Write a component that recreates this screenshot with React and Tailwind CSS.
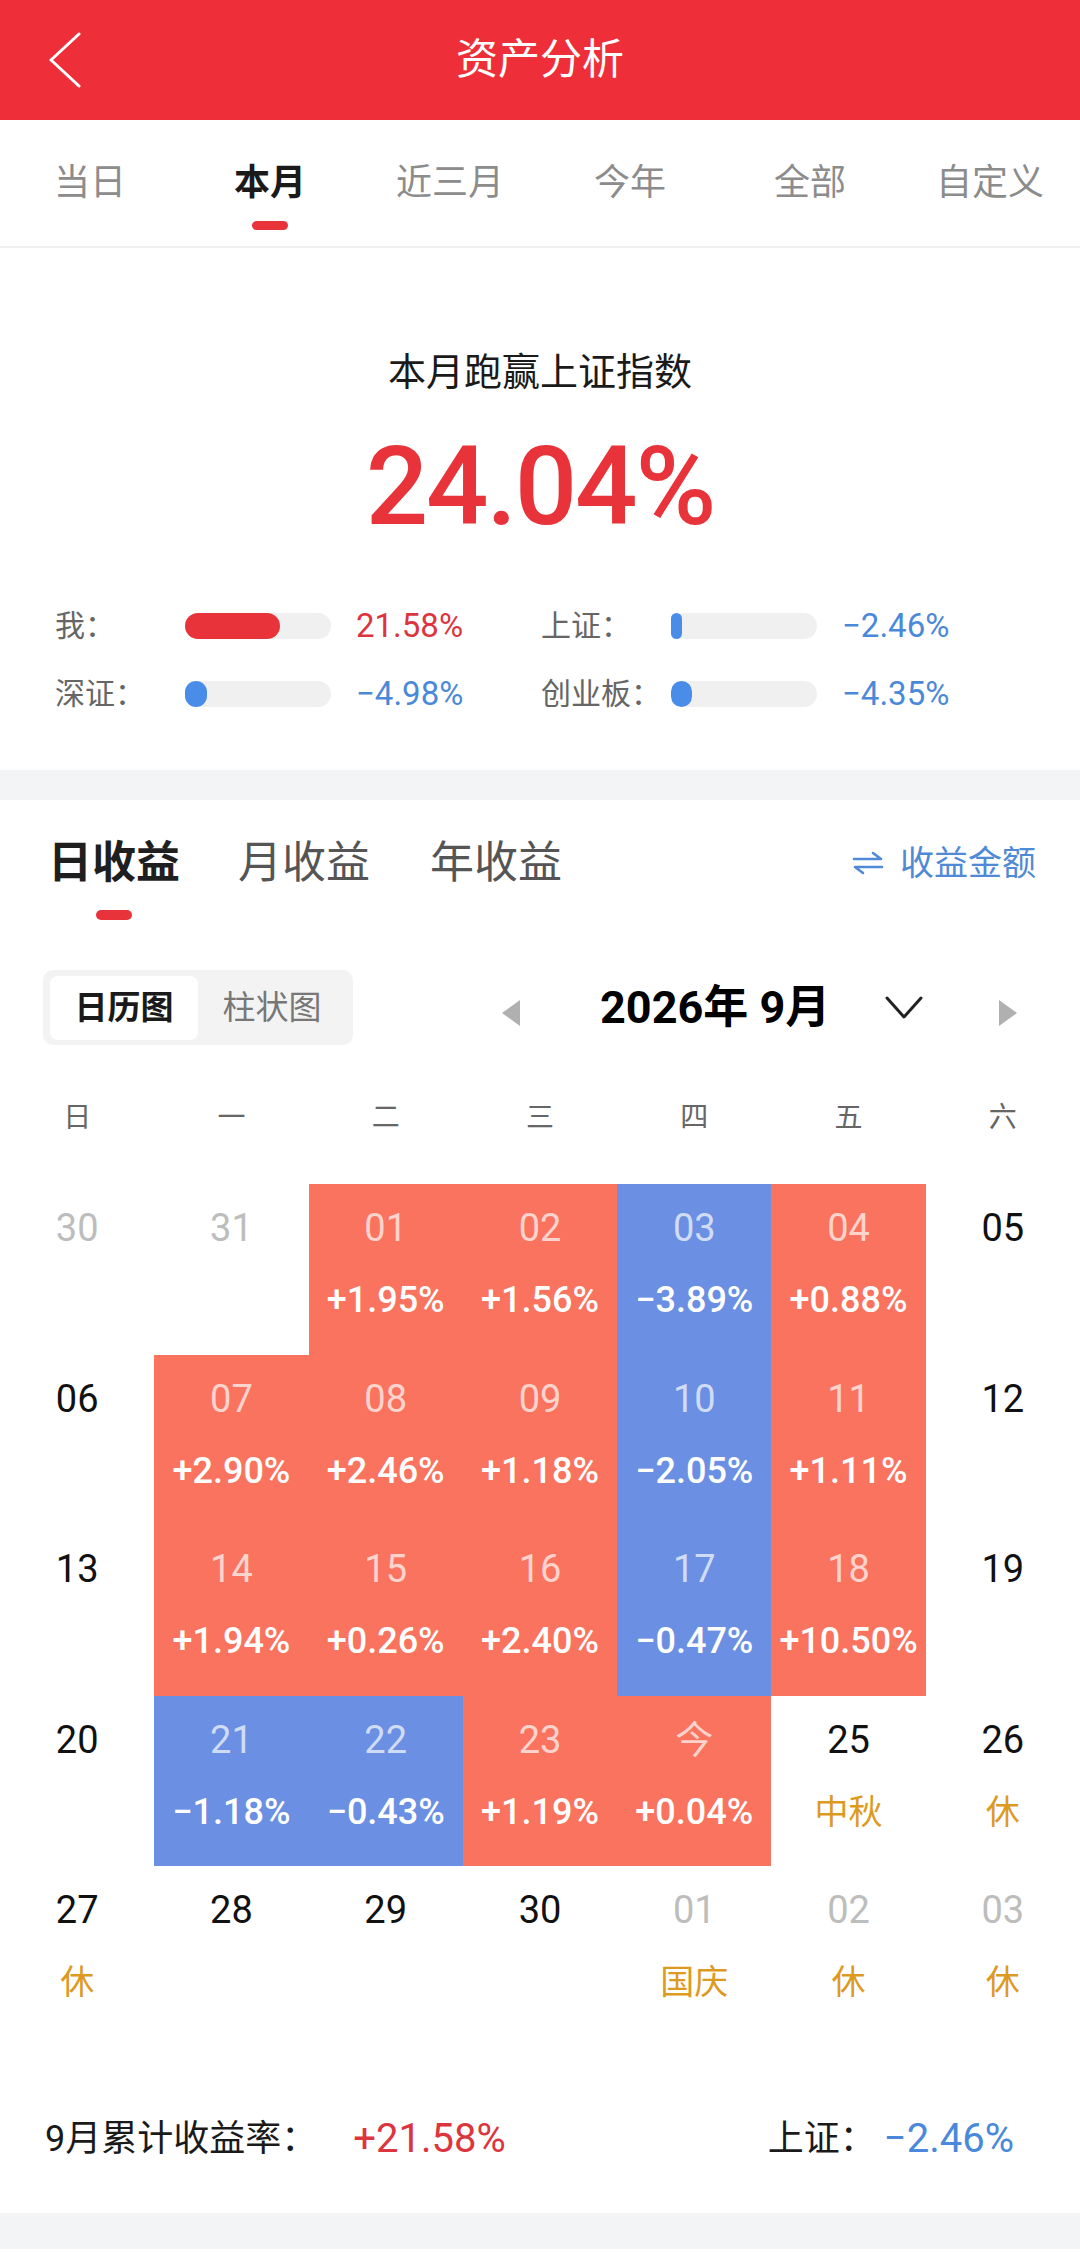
import React from "react";

const rows = [
  [
    { d: "30", gray: true },
    { d: "31", gray: true },
    { d: "01", p: "+1.95%", c: "r" },
    { d: "02", p: "+1.56%", c: "r" },
    { d: "03", p: "−3.89%", c: "b" },
    { d: "04", p: "+0.88%", c: "r" },
    { d: "05" },
  ],
  [
    { d: "06" },
    { d: "07", p: "+2.90%", c: "r" },
    { d: "08", p: "+2.46%", c: "r" },
    { d: "09", p: "+1.18%", c: "r" },
    { d: "10", p: "−2.05%", c: "b" },
    { d: "11", p: "+1.11%", c: "r" },
    { d: "12" },
  ],
  [
    { d: "13" },
    { d: "14", p: "+1.94%", c: "r" },
    { d: "15", p: "+0.26%", c: "r" },
    { d: "16", p: "+2.40%", c: "r" },
    { d: "17", p: "−0.47%", c: "b" },
    { d: "18", p: "+10.50%", c: "r" },
    { d: "19" },
  ],
  [
    { d: "20" },
    { d: "21", p: "−1.18%", c: "b" },
    { d: "22", p: "−0.43%", c: "b" },
    { d: "23", p: "+1.19%", c: "r" },
    { d: "今", p: "+0.04%", c: "r" },
    { d: "25", h: "中秋" },
    { d: "26", h: "休" },
  ],
  [
    { d: "27", h: "休" },
    { d: "28" },
    { d: "29" },
    { d: "30" },
    { d: "01", gray: true, h: "国庆" },
    { d: "02", gray: true, h: "休" },
    { d: "03", gray: true, h: "休" },
  ],
];

const tabs = ["当日", "本月", "近三月", "今年", "全部", "自定义"];
const weekdays = ["日", "一", "二", "三", "四", "五", "六"];

function Cell({ cell }) {
  const bg =
    cell.c === "r" ? "bg-[#fa735f]" : cell.c === "b" ? "bg-[#6b8fe2]" : "bg-white";
  const dateColor = cell.c
    ? "text-white/70"
    : cell.gray
    ? "text-[#bdbdbd]"
    : "text-[#111111]";
  return (
    <div className={`h-[170.5px] flex flex-col items-center pt-[24px] ${bg}`}>
      <div className={`h-[40px] leading-[40px] text-[38px] ${dateColor}`}>{cell.d}</div>
      {cell.p && (
        <div className="mt-[34px] h-[36px] leading-[36px] text-[36px] font-medium text-white">
          {cell.p}
        </div>
      )}
      {cell.h && (
        <div className="mt-[34px] h-[36px] leading-[36px] text-[34px] text-[#dc9a22]">
          {cell.h}
        </div>
      )}
    </div>
  );
}

function Bar({ color, width }) {
  return (
    <div className="w-[146px] h-[26px] rounded-full bg-[#f0f0f0] flex">
      <div className={`h-[26px] rounded-full ${color}`} style={{ width }} />
    </div>
  );
}

function CompareItem({ label, color, width, value, valueColor }) {
  return (
    <div className="flex items-center h-[40px]">
      <div className="w-[130px] text-[30px] leading-[40px] text-[#666666]">{label}</div>
      <Bar color={color} width={width} />
      <div className={`ml-[25px] text-[33px] leading-[40px] ${valueColor}`}>{value}</div>
    </div>
  );
}

export default function App() {
  return (
    <div className="w-[1080px] min-h-[2252px] bg-white font-['Roboto','Noto_Sans_CJK_SC',sans-serif]">
      {/* Header */}
      <div className="h-[120px] bg-[#ee2f39] flex items-center">
        <div className="w-[120px] pl-[48px] flex items-center">
          <svg width="34" height="56" viewBox="0 0 34 56">
            <polyline
              points="31,2 3,28 31,54"
              fill="none"
              stroke="white"
              strokeWidth="3"
              strokeLinecap="round"
              strokeLinejoin="round"
            />
          </svg>
        </div>
        <div className="flex-1 text-center text-white text-[42px] leading-[50px]">资产分析</div>
        <div className="w-[120px]" />
      </div>

      {/* Period tabs */}
      <div className="h-[128px] grid grid-cols-6 border-b-2 border-[#efefef]">
        {tabs.map((t) => {
          const active = t === "本月";
          return (
            <div key={t} className="flex flex-col items-center pt-[45px]">
              <div
                className={`text-[36px] leading-[36px] ${
                  active ? "text-[#1a1a1a] font-bold" : "text-[#8c8c8c]"
                }`}
              >
                {t}
              </div>
              <div
                className={`mt-[20px] h-[9px] w-[36px] rounded-full ${
                  active ? "bg-[#e8333a]" : "bg-transparent"
                }`}
              />
            </div>
          );
        })}
      </div>

      {/* Summary */}
      <div className="pt-[105px] pb-[56px] flex flex-col items-center">
        <div className="text-[38px] leading-[38px] text-[#1a1a1a]">本月跑赢上证指数</div>
        <div className="mt-[40px] text-[110px] leading-[112px] font-medium tracking-[-0.02em] text-[#e8333a]">
          24.04%
        </div>
        <div className="mt-[63px] w-full pl-[55px] grid grid-cols-[486px_1fr] gap-y-[28px]">
          <CompareItem label="我：" color="bg-[#e8333a]" width="95px" value="21.58%" valueColor="text-[#dc3540]" />
          <CompareItem label="上证：" color="bg-[#4a8de8]" width="11px" value="−2.46%" valueColor="text-[#4a89d9]" />
          <CompareItem label="深证：" color="bg-[#4a8de8]" width="22px" value="−4.98%" valueColor="text-[#4a89d9]" />
          <CompareItem label="创业板：" color="bg-[#4a8de8]" width="21px" value="−4.35%" valueColor="text-[#4a89d9]" />
        </div>
      </div>

      <div className="h-[30px] bg-[#f3f4f6]" />

      {/* Earnings */}
      <div className="pt-[41px]">
        <div className="flex items-start pl-[48px] pr-[44px]">
          <div className="flex flex-col items-center">
            <div className="text-[44px] leading-[44px] font-bold text-[#1f1f1f]">日收益</div>
            <div className="mt-[25px] h-[10px] w-[36px] rounded-full bg-[#e8333a]" />
          </div>
          <div className="ml-[58px] text-[44px] leading-[44px] text-[#555555]">月收益</div>
          <div className="ml-[60px] text-[44px] leading-[44px] text-[#555555]">年收益</div>
          <div className="ml-auto h-[44px] flex items-center text-[#4f8ad6]">
            <svg width="32" height="24" viewBox="0 0 32 24" className="mr-[16px]">
              <path
                d="M2 8 H29 L21 2 M30 16 H3 L11 22"
                fill="none"
                stroke="#4f8ad6"
                strokeWidth="2.6"
                strokeLinecap="round"
                strokeLinejoin="round"
              />
            </svg>
            <span className="text-[34px] leading-[44px]">收益金额</span>
          </div>
        </div>

        {/* Segmented + month nav */}
        <div className="mt-[50px] flex items-center pl-[43px]">
          <div className="w-[310px] h-[75px] rounded-[10px] bg-[#f3f3f3] flex items-center px-[7px]">
            <div className="w-[148px] h-[64px] rounded-[8px] bg-white flex items-center justify-center text-[33px] font-bold text-[#1a1a1a]">
              日历图
            </div>
            <div className="flex-1 text-center text-[33px] text-[#777777]">柱状图</div>
          </div>
          <div className="ml-[149px] w-[18px] flex items-center mt-[10px]">
            <svg width="18" height="26" viewBox="0 0 18 26">
              <polygon points="18,0 0,13 18,26" fill="#b0b0b0" />
            </svg>
          </div>
          <div className="ml-[80px] w-[226px] text-center text-[45px] leading-[50px] font-bold text-[#000000] whitespace-nowrap">
            2026年 9月
          </div>
          <div className="ml-[59px] w-[38px] flex items-center">
            <svg width="38" height="24" viewBox="0 0 38 24">
              <polyline
                points="2,2 19,21 36,2"
                fill="none"
                stroke="#222222"
                strokeWidth="3"
                strokeLinecap="round"
                strokeLinejoin="round"
              />
            </svg>
          </div>
          <div className="ml-[76px] w-[18px] flex items-center mt-[10px]">
            <svg width="18" height="26" viewBox="0 0 18 26">
              <polygon points="0,0 18,13 0,26" fill="#b0b0b0" />
            </svg>
          </div>
        </div>

        {/* Weekdays */}
        <div className="mt-[59px] grid grid-cols-7">
          {weekdays.map((w) => (
            <div key={w} className="text-center text-[28px] leading-[28px] text-[#666666]">
              {w}
            </div>
          ))}
        </div>

        {/* Calendar */}
        <div className="mt-[52px] grid grid-cols-7">
          {rows.flat().map((cell, i) => (
            <Cell key={i} cell={cell} />
          ))}
        </div>

        {/* Footer summary */}
        <div className="mt-[82px] pb-[54px] flex items-center pl-[45px] pr-[66px] h-[40px] box-content">
          <span className="text-[36px] leading-[40px] text-[#1a1a1a]">9月累计收益率：</span>
          <span className="ml-[36px] text-[40px] leading-[40px] text-[#dc3540]">+21.58%</span>
          <span className="ml-auto text-[36px] leading-[40px] text-[#1a1a1a]">上证：</span>
          <span className="ml-[8px] text-[40px] leading-[40px] text-[#4a89d9]">−2.46%</span>
        </div>
      </div>

      <div className="h-[36px] bg-[#f3f4f6]" />
    </div>
  );
}
